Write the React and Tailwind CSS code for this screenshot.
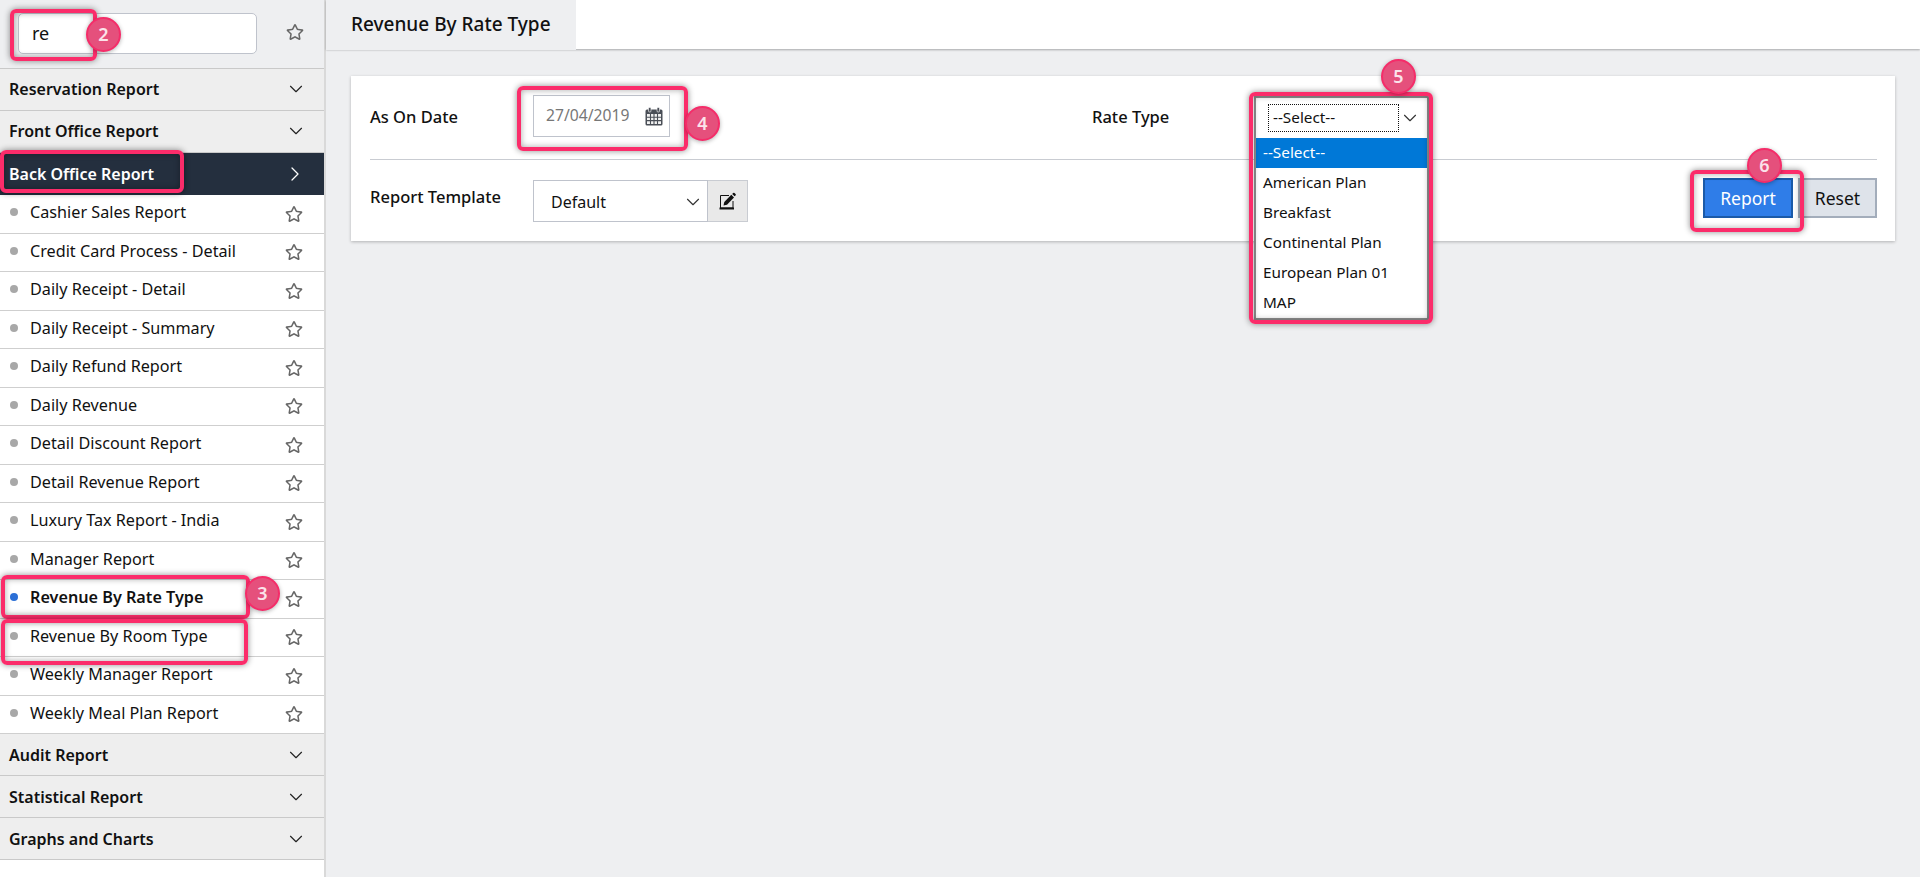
import React from "react";
import { ChevronDown, ChevronRight } from "lucide-react";
import { FaRegStar } from "react-icons/fa";

const reports = [
  "Cashier Sales Report",
  "Credit Card Process - Detail",
  "Daily Receipt - Detail",
  "Daily Receipt - Summary",
  "Daily Refund Report",
  "Daily Revenue",
  "Detail Discount Report",
  "Detail Revenue Report",
  "Luxury Tax Report - India",
  "Manager Report",
  "Revenue By Rate Type",
  "Revenue By Room Type",
  "Weekly Manager Report",
  "Weekly Meal Plan Report",
];

const rateTypes = ["American Plan", "Breakfast", "Continental Plan", "European Plan 01", "MAP"];

function GroupRow({ label, low }) {
  return (
    <div className={low ? "flex h-[42px] items-center justify-between border-b border-[#c9c9c9] bg-[#eeeeee] pl-[9px] pr-[17px] text-[16px] font-semibold text-[#111]" : "flex h-[42px] items-center justify-between border-b border-[#c9c9c9] bg-[#eeeeee] pb-[1px] pl-[9px] pr-[17px] text-[16px] font-semibold text-[#111]"}>
      <span>{label}</span>
      <ChevronDown size={22} strokeWidth={1.25} className="text-[#222]" />
    </div>
  );
}

function ReportRow({ label }) {
  const active = label === "Revenue By Rate Type";
  return (
    <div className="flex h-[38.5px] items-center border-b border-[#cfcfcf] bg-white pb-[3px] pl-[10px] pr-[21px] text-[16.2px] text-[#111]">
      <span className={active ? "h-2 w-2 rounded-full bg-[#2b6fd6]" : "h-2 w-2 rounded-full bg-[#a8a8a8]"} />
      <span className={active ? "ml-[12px] flex-1 font-semibold" : "ml-[12px] flex-1"}>{label}</span>
      <FaRegStar size={18} className="mt-[3px] text-[#666]" />
    </div>
  );
}

function CalendarIcon() {
  return (
    <svg width="18" height="19" viewBox="0 0 18 19" className="text-[#4a4f57]">
      <rect x="0.5" y="2.5" width="17" height="16" rx="1.5" fill="currentColor" />
      <rect x="3.5" y="0.5" width="2.5" height="4.5" rx="1" fill="currentColor" stroke="#fff" strokeWidth="0.6" />
      <rect x="12" y="0.5" width="2.5" height="4.5" rx="1" fill="currentColor" stroke="#fff" strokeWidth="0.6" />
      <path d="M2 7h14v10H2z" fill="#f2f2f2" />
      <path d="M2 10.3h14M2 13.6h14M5.5 7v10M9 7v10M12.5 7v10" stroke="#4a4f57" strokeWidth="1.1" />
    </svg>
  );
}

function EditIcon() {
  return (
    <svg width="17" height="18" viewBox="0 0 17 18" className="text-[#111]">
      <path d="M10 3.5H1.5V16h12.5V9" fill="none" stroke="currentColor" strokeWidth="1" />
      <path d="M0.5 16.5h14.5" stroke="currentColor" strokeWidth="2" />
      <path d="M4.5 13.5l0.8-3.5 7-7.2 2.7 2.7-7 7.2z" fill="currentColor" />
      <path d="M13.2 1.9l0.9-0.9a1 1 0 0 1 1.4 0l1 1a1 1 0 0 1 0 1.4l-0.9 0.9z" fill="currentColor" />
    </svg>
  );
}

function Mark({ className }) {
  return <div className={`pointer-events-none absolute rounded-[6px] border-[4px] border-[#fb2c6a] shadow-[0_0_6px_rgba(0,0,0,0.45),inset_0_0_6px_rgba(0,0,0,0.35)] ${className}`} />;
}

function Badge({ n, className }) {
  return (
    <div className={`pointer-events-none absolute flex h-[35px] w-[35px] items-center justify-center rounded-full border-[2px] border-[#f52c69] bg-[#e5507c] text-[18px] font-semibold text-[#fbe3ea] shadow-[0_1px_4px_rgba(0,0,0,0.3)] ${className}`}>
      {n}
    </div>
  );
}

export default function App() {
  return (
    <div className="relative flex h-[877px] w-[1920px] overflow-hidden bg-[#eeeff1] font-['Noto_Sans',sans-serif]">
      <aside className="flex h-full w-[326px] shrink-0 flex-col border-r-2 border-[#d9d9d9] bg-white">
        <div className="flex h-[69px] items-center border-b border-[#c9c9c9] bg-[#eeeff1] pb-[2px] pl-[18px]">
          <div className="flex h-[41px] w-[239px] items-center rounded-[5px] border border-[#bfc3cc] bg-white pl-[13px] pt-[1px] text-[18px] text-[#111]">re</div>
          <FaRegStar size={18} className="mb-[2px] ml-[29px] text-[#666]" />
        </div>
        <GroupRow label="Reservation Report" />
        <GroupRow label="Front Office Report" />
        <div className="flex h-[42px] items-center justify-between bg-[#242f3e] pl-[9px] pr-[17px] text-[16px] font-semibold text-white">
          <span>Back Office Report</span>
          <ChevronRight size={24} strokeWidth={1.25} />
        </div>
        {reports.map((r) => (
          <ReportRow key={r} label={r} />
        ))}
        <GroupRow low label="Audit Report" />
        <GroupRow low label="Statistical Report" />
        <GroupRow low label="Graphs and Charts" />
      </aside>

      <main className="flex-1">
        <div className="flex h-[49px] bg-white shadow-[0_1px_2px_rgba(0,0,0,0.3)]">
          <div className="flex h-[50px] w-[250px] items-center bg-[#eeeff1] pb-[1px] pl-[25px] text-[19px] font-medium text-[#111]">Revenue By Rate Type</div>
        </div>

        <section className="ml-[25px] mt-[27px] h-[165px] w-[1544px] bg-white pl-[19px] pr-[18px] shadow-[0_1px_3px_rgba(0,0,0,0.25)]">
          <div className="flex h-[84px] items-center border-b border-[#c9ccd2] pb-[3px] text-[16.5px] font-medium text-[#111]">
            <span className="w-[163px] pt-[2px]">As On Date</span>
            <div className="flex h-[42px] w-[137px] items-center justify-between border border-[#bfc3cc] pl-[12px] pr-[6px] text-[15.7px] font-normal text-[#777]">
              27/04/2019
              <CalendarIcon />
            </div>
            <span className="ml-[422px] w-[162px] pt-[2px]">Rate Type</span>
            <div className="relative h-[41px] w-[170px]" />
          </div>
          <div className="flex h-[81px] items-start pt-[20px]">
            <span className="mt-[5px] w-[163px] text-[16.5px] font-medium text-[#111]">Report Template</span>
            <div className="flex h-[42px] w-[175px] items-center justify-between border border-[#bfc3cc] pl-[17px] pr-[3px] pt-[1px] text-[16px] text-[#111]">
              Default
              <ChevronDown size={22} strokeWidth={1.25} className="text-[#333]" />
            </div>
            <div className="flex h-[42px] w-[40px] items-center justify-center border border-l-0 border-[#c9ccd2] bg-[#e9e9e9]">
              <EditIcon />
            </div>
            <div className="ml-auto mt-[-2px] flex gap-[5px] text-[17.5px]">
              <button className="h-[40px] w-[90px] border-[2px] border-[#1b5aa8] bg-[#2f7de8] text-white">Report</button>
              <button className="h-[40px] w-[79px] border-[2px] border-[#a3adbb] bg-[#dee3ea] text-[#111]">Reset</button>
            </div>
          </div>
        </section>
      </main>

      {/* native select popup, sits over the card */}
      <div className="absolute left-[1254px] top-[96px] w-[175px] border-[2px] border-[#8f8f8f] bg-white text-[15.3px] text-[#111]">
        <div className="flex h-[40px] items-center justify-between pl-[12px] pr-[6px]">
          <div className="flex h-[28px] w-[131px] items-center border border-dotted border-[#111] pb-[1px] pl-[4px]">--Select--</div>
          <ChevronDown size={22} strokeWidth={1.25} className="text-[#333]" />
        </div>
        <div className="flex h-[30px] items-center bg-[#0078d7] pb-[1px] pl-[7px] text-white">--Select--</div>
        {rateTypes.map((t) => (
          <div key={t} className="flex h-[30px] items-center pb-[1px] pl-[7px]">{t}</div>
        ))}
      </div>

      <Mark className="left-[10px] top-[9px] h-[52px] w-[87px]" />
      <Mark className="left-0 top-[150px] h-[43px] w-[184px]" />
      <Mark className="left-[1px] top-[575px] h-[44px] w-[249px]" />
      <Mark className="left-[1px] top-[619px] h-[46px] w-[247px]" />
      <Mark className="left-[517px] top-[86px] h-[65px] w-[171px]" />
      <Mark className="left-[1249px] top-[92px] h-[232px] w-[184px]" />
      <Mark className="left-[1690px] top-[170px] h-[62px] w-[114px]" />

      <Badge n="2" className="left-[86px] top-[17px]" />
      <Badge n="3" className="left-[245px] top-[576px]" />
      <Badge n="4" className="left-[685px] top-[106px]" />
      <Badge n="5" className="left-[1381px] top-[59px]" />
      <Badge n="6" className="left-[1747px] top-[148px]" />
    </div>
  );
}
